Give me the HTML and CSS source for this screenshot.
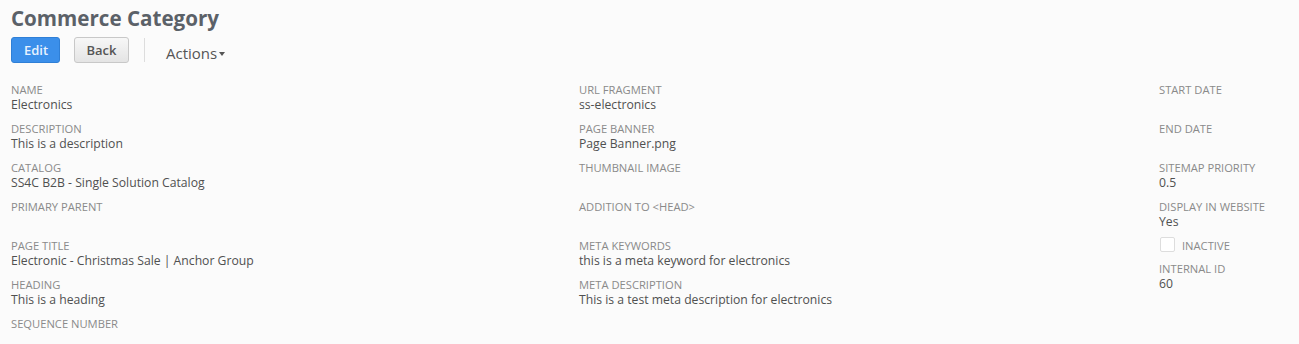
FILE: index.html
```html
<!DOCTYPE html>
<html>
<head>
<title>Commerce Category</title>
<link rel="stylesheet" href="styles.css">
</head>
<body>
<h1 class="title">Commerce Category</h1>
<div class="toolbar">
<button class="btn btn-primary">Edit</button>
<button class="btn">Back</button>
<span class="sep"></span>
<span class="actions">Actions<span class="caret"></span></span>
</div>
<div class="fields">
<div class="col col1">
<div class="field"><div class="label">Name</div><div class="value">Electronics</div></div>
<div class="field"><div class="label">Description</div><div class="value">This is a description</div></div>
<div class="field"><div class="label">Catalog</div><div class="value">SS4C B2B - Single Solution Catalog</div></div>
<div class="field"><div class="label">Primary Parent</div><div class="value"></div></div>
<div class="field"><div class="label">Page Title</div><div class="value">Electronic - Christmas Sale | Anchor Group</div></div>
<div class="field"><div class="label">Heading</div><div class="value">This is a heading</div></div>
<div class="field"><div class="label">Sequence Number</div><div class="value"></div></div>
</div>
<div class="col col2">
<div class="field"><div class="label">URL Fragment</div><div class="value">ss-electronics</div></div>
<div class="field"><div class="label">Page Banner</div><div class="value">Page Banner.png</div></div>
<div class="field"><div class="label">Thumbnail Image</div><div class="value"></div></div>
<div class="field"><div class="label">Addition to &lt;Head&gt;</div><div class="value"></div></div>
<div class="field"><div class="label">Meta Keywords</div><div class="value">this is a meta keyword for electronics</div></div>
<div class="field"><div class="label">Meta Description</div><div class="value">This is a test meta description for electronics</div></div>
</div>
<div class="col col3">
<div class="field"><div class="label">Start Date</div><div class="value"></div></div>
<div class="field"><div class="label">End Date</div><div class="value"></div></div>
<div class="field"><div class="label">Sitemap Priority</div><div class="value">0.5</div></div>
<div class="field"><div class="label">Display in Website</div><div class="value">Yes</div></div>
<div class="field check"><span class="box"></span><span class="label">Inactive</span></div>
<div class="field"><div class="label">Internal ID</div><div class="value">60</div></div>
</div>
</div>
</body>
</html>
```
FILE: styles.css
```css
body{margin:0;padding:4px 11px;background:#fbfbfb;font-family:"Open Sans",sans-serif;color:#4a4a4a}
.title{margin:0;font-size:20.6px;font-weight:bold;color:#5b6168;line-height:28px}
.toolbar{display:flex;align-items:center;margin-top:5px;height:26px}
.btn{font-family:"Open Sans",sans-serif;font-size:13px;font-weight:600;height:26px;padding:0 11px;border-radius:3px;border:1px solid #c8c8c8;background:linear-gradient(#f7f7f7,#e4e4e4);color:#555;margin-right:14px}
.btn-primary{background:#3b8fea;border-color:#2f7fd6;color:#e8f2ff;padding:0 12px;width:49px}
.btn:nth-child(2){width:55px}
.sep{width:1px;height:24px;background:#ddd;margin:0 21px 0 1px}
.actions{font-size:15px;color:#555;display:flex;align-items:center;margin-top:6px}
.caret{border-left:3.5px solid transparent;border-right:3.5px solid transparent;border-top:4px solid #555;margin-left:2px;margin-top:2px}
.fields{display:grid;grid-template-columns:568px 580px 1fr;margin-top:19px}
.field{margin-bottom:9px}
.label{font-size:11.2px;line-height:15px;text-transform:uppercase;color:#8a8a8a}
.value{font-size:12.2px;line-height:15px;min-height:15px;color:#505050}
.check{display:flex;align-items:center;margin-bottom:8px;height:15px}
.box{width:13px;height:13px;border:1px solid #ddd;border-radius:2px;background:#fff;margin:-3px 7px 0 1px}
```
